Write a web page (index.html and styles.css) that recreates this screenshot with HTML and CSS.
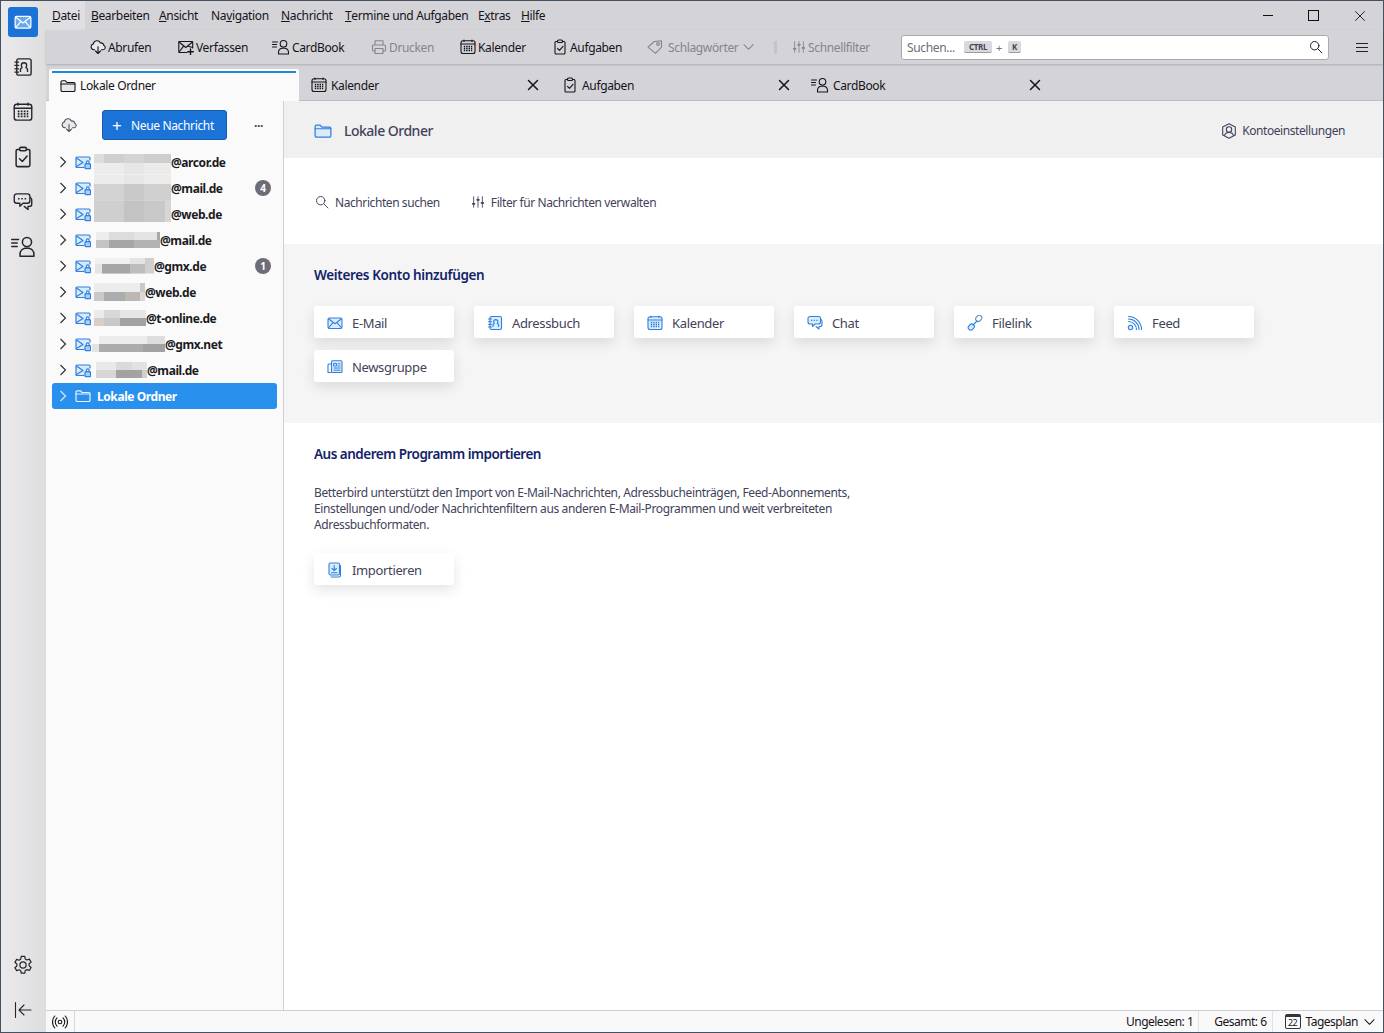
FILE: index.html
```html
<!DOCTYPE html>
<html lang="de">
<head>
    <meta charset="UTF-8">
    <title>Betterbird - Lokale Ordner</title>
    <link rel="stylesheet" href="styles.css">
</head>
<body>
    <!-- Icon-Sprite -->
    <svg class="sprite" xmlns="http://www.w3.org/2000/svg">
        <symbol id="i-mail" viewBox="0 0 16 16"><rect x="1" y="3" width="14" height="10.5" rx="1.5" fill="var(--fill, none)"/><path d="M1.5 3.800 8 8.800l6.500-5M1.500 13l4.700-5.600M14.500 13 9.800 7.400"/></symbol>
        <symbol id="i-mail-lock" viewBox="0 0 16 16"><path d="M9 13.500H2a1 1 0 0 1-1-1V4a1 1 0 0 1 1-1h12a1 1 0 0 1 1 1v3.500H10V13z" fill="#d8eafd" stroke="none"/><path d="M9 13.500H2a1 1 0 0 1-1-1V4a1 1 0 0 1 1-1h12a1 1 0 0 1 1 1v2" fill="none"/><path d="M1.500 4l6.500 4.500-6.500 4" fill="none"/><rect x="10" y="9.700" width="5.500" height="5" rx="1" fill="#a9d0f8"/><path d="M11.300 9.700V8.200a1.400 1.400 0 0 1 2.800 0v1.500" fill="none"/></symbol>
        <symbol id="i-cloud" viewBox="0 0 16 16"><path d="M4.500 10.800H3.800a3 3 0 0 1-.4-5.900 3.700 3.700 0 0 1 7-1 3 3 0 0 1 3.500 2.700 2.200 2.200 0 0 1-.8 4.200h-1.600" fill="#e9e9ec"/><path d="M8 7.500v7M5.500 12 8 14.500l2.500-2.500" fill="none"/></symbol>
        <symbol id="i-compose" viewBox="0 0 16 16"><path d="M9 13.500H1.500a.7.7 0 0 1-.7-.7V3.200a.7.7 0 0 1 .7-.7h12.500a.7.7 0 0 1 .7.7V9" fill="none"/><path d="M1 3l6.800 5.500L14.500 3M1.200 13l4.300-5.800M14.500 8.500 10.200 7.200" fill="none"/><path d="M12.500 10v5.500M9.800 12.800h5.500" stroke-width="1.400"/></symbol>
        <symbol id="i-cardbook" viewBox="0 0 18 16"><path d="M.5 3h5M.5 5.500h4M.5 8h4" stroke-width="1"/><circle cx="11.500" cy="4.800" r="3.300" fill="none"/><path d="M6.500 15v-1.500c0-2.500 2-4 3.500-4.300h3c1.500.3 3.500 1.800 3.500 4.300V15z" fill="none"/></symbol>
        <symbol id="i-print" viewBox="0 0 16 16"><path d="M4 6V1.800h8V6M4 12H2.500a1 1 0 0 1-1-1V7a1 1 0 0 1 1-1h11a1 1 0 0 1 1 1v4a1 1 0 0 1-1 1H12" fill="none"/><path d="M4 9.500h8v5H4z" fill="none"/></symbol>
        <symbol id="i-cal" viewBox="0 0 16 16"><rect x="1" y="1.800" width="14" height="12.700" rx="2" fill="var(--fill, none)"/><path d="M1 5h14M4 1v1.500M12 1v1.500"/><path d="M3.800 7.500h8.400M3.800 9.500h8.400M3.800 11.500h8.400" stroke-dasharray="1.400 1" stroke-width="1.300" stroke-linecap="butt"/></symbol>
        <symbol id="i-task" viewBox="0 0 16 16"><path d="M5.500 2.500H4a1 1 0 0 0-1 1v10.500a1 1 0 0 0 1 1h8a1 1 0 0 0 1-1V3.500a1 1 0 0 0-1-1h-1.500" fill="none"/><rect x="5.500" y="1" width="5" height="2.500" rx="1" fill="none"/><path d="m5.500 9.300 2 2 3.500-4" fill="none"/></symbol>
        <symbol id="i-tag" viewBox="0 0 16 16"><path d="M1 8.200 7.200 2.500l7.300-.8v6.500l-6 6.200z" fill="none"/><circle cx="11" cy="5" r="1.400" fill="none"/></symbol>
        <symbol id="i-filter" viewBox="0 0 16 16"><path d="M3 2v12M8 2v12M13 2v12" stroke-width="1"/><path d="M2 10h2M7 5.500h2M12 9h2" stroke-width="2"/></symbol>
        <symbol id="i-search" viewBox="0 0 16 16"><circle cx="6.500" cy="6.500" r="4.800" fill="none"/><path d="m10 10 4.800 4.800"/></symbol>
        <symbol id="i-folder" viewBox="0 0 16 16"><path d="M1 4a1.200 1.200 0 0 1 1.200-1.200h3.300L7 4.500h6.800A1.200 1.200 0 0 1 15 5.700v6.600a1.200 1.200 0 0 1-1.200 1.200H2.200A1.200 1.200 0 0 1 1 12.300z" fill="var(--fill, none)"/><path d="M1 6h14" fill="none"/></symbol>
        <symbol id="i-book" viewBox="0 0 16 16"><rect x="3" y="1.500" width="11.500" height="13" rx="1.500" fill="var(--fill, none)"/><path d="M1.500 4h3M1.500 6.700h3M1.500 9.400h3M1.500 12h3" stroke-width="1"/><path d="M6 11.500v-1.500c0-.8.800-1.300 1.300-1.500a2.600 2.600 0 0 1-.6-1.800 2.100 2.100 0 0 1 4.200 0c0 .7-.2 1.300-.6 1.800.5.200 1.300.7 1.300 1.500v1.500" fill="none"/></symbol>
        <symbol id="i-chat" viewBox="0 0 16 16"><path d="M3 1.500h8.500a2 2 0 0 1 2 2V7a2 2 0 0 1-2 2H8l-2.500 2.500V9H3a2 2 0 0 1-2-2V3.500a2 2 0 0 1 2-2z" fill="var(--fill, none)"/><path d="M14 4.500a2 2 0 0 1 1 1.700v3.300a2 2 0 0 1-2 2h-1V14l-3-2.500" fill="none"/><path d="M4 5.300h6.500" stroke-dasharray="1.200 1.450" stroke-width="1.200" stroke-linecap="butt"/></symbol>
        <symbol id="i-link" viewBox="0 0 16 16"><rect x="8.500" y="1" width="6.500" height="5" rx="2.500" transform="rotate(-45 11.700 3.500)" fill="none" stroke="#5d8fcf"/><rect x="1" y="9.500" width="6.500" height="5" rx="2.500" transform="rotate(-45 4.300 12)" fill="#d8eafd"/><path d="m6 10 4-4"/></symbol>
        <symbol id="i-feed" viewBox="0 0 16 16"><circle cx="3.500" cy="12.500" r="2.200" fill="var(--fill, none)"/><path d="M1.500 6.500a8 8 0 0 1 8 8M1.500 4a10.500 10.500 0 0 1 10.500 10.500M1.500 1.500a13 13 0 0 1 13 13" fill="none"/></symbol>
        <symbol id="i-news" viewBox="0 0 16 16"><path d="M5 5H2a1 1 0 0 0-1 1v7.500h3" fill="none"/><rect x="4.500" y="1.800" width="10.500" height="11.700" rx="1" fill="var(--fill, none)"/><path d="M7 4.500h2.500v2.500H7zM11 4.800h2M11 7h2M7 9h6M7 11.200h6" fill="none" stroke-width="1"/></symbol>
        <symbol id="i-import" viewBox="0 0 16 16"><rect x="2" y="1" width="10.500" height="12" rx="1.500" fill="var(--fill, none)"/><path d="M13.500 3.500v10a1.500 1.500 0 0 1-1.500 1.500H4" fill="none"/><path d="M7.200 3.500v5M5 6.500l2.200 2.200 2.200-2.200M4.500 10.800h5.500" fill="none"/></symbol>
        <symbol id="i-account" viewBox="0 0 16 16"><path d="M8 .8 14.300 4v8L8 15.200 1.700 12V4z" fill="none"/><circle cx="8" cy="6.500" r="2.700" fill="none"/><path d="M3.500 12.500c.5-2 2.200-3 4.500-3s4 1 4.500 3" fill="none"/></symbol>
        <symbol id="i-gear" viewBox="0 0 18 18"><path d="M7.400 1.300h3.200l.4 2.300 1.500.9 2.200-.8 1.600 2.700-1.800 1.500v1.800l1.800 1.500-1.600 2.700-2.200-.8-1.500.9-.4 2.300H7.400L7 14.200l-1.500-.9-2.200.8-1.600-2.700 1.800-1.500V8.100L1.700 6.600l1.600-2.700 2.200.8L7 3.600z" fill="none"/><circle cx="9" cy="9" r="2.800" fill="none"/></symbol>
        <symbol id="i-collapse" viewBox="0 0 18 18"><path d="M1.500 1.500v15M17 9H5M10 4 5 9l5 5" fill="none"/></symbol>
        <symbol id="i-radio" viewBox="0 0 16 16"><circle cx="8" cy="8" r="1.800" fill="none"/><path d="M5 3.800a6 6 0 0 0 0 8.400M11 3.800a6 6 0 0 1 0 8.400M2.800 2a9 9 0 0 0 0 12M13.200 2a9 9 0 0 1 0 12" fill="none"/></symbol>
        <symbol id="i-chevron" viewBox="0 0 8 12"><path d="m1.500 1 5 5-5 5" fill="none"/></symbol>
        <symbol id="i-down" viewBox="0 0 12 8"><path d="m1 1.500 5 5 5-5" fill="none"/></symbol>
        <symbol id="i-close" viewBox="0 0 12 12"><path d="m1.500 1.500 9 9M10.500 1.500l-9 9"/></symbol>
    </svg>

    <div class="window">
        <nav class="spaces">
            <div class="space-mail"><svg class="ico ico-18"><use href="#i-mail"/></svg></div>
            <div class="space-item"><svg class="ico ico-20"><use href="#i-book"/></svg></div>
            <div class="space-item"><svg class="ico ico-20"><use href="#i-cal"/></svg></div>
            <div class="space-item"><svg class="ico ico-task"><use href="#i-task"/></svg></div>
            <div class="space-item"><svg class="ico ico-20"><use href="#i-chat"/></svg></div>
            <div class="space-item"><svg class="ico ico-22"><use href="#i-cardbook"/></svg></div>
            <div class="space-item space-bottom"><svg class="ico ico-20"><use href="#i-gear"/></svg></div>
            <div class="space-item"><svg class="ico ico-18"><use href="#i-collapse"/></svg></div>
        </nav>

        <div class="content">
            <div class="menubar">
                <span class="menu-item menu-active"><u>D</u>atei</span>
                <span class="menu-item"><u>B</u>earbeiten</span>
                <span class="menu-item"><u>A</u>nsicht</span>
                <span class="menu-item">Na<u>v</u>igation</span>
                <span class="menu-item"><u>N</u>achricht</span>
                <span class="menu-item"><u>T</u>ermine und Aufgaben</span>
                <span class="menu-item">E<u>x</u>tras</span>
                <span class="menu-item"><u>H</u>ilfe</span>
                <div class="win-controls">
                    <span class="win-min"></span>
                    <span class="win-max"></span>
                    <svg class="ico win-close"><use href="#i-close"/></svg>
                </div>
            </div>

            <div class="toolbar">
                <span class="tool"><svg class="ico"><use href="#i-cloud"/></svg>Abrufen</span>
                <span class="tool"><svg class="ico"><use href="#i-compose"/></svg>Verfassen</span>
                <span class="tool"><svg class="ico ico-wide"><use href="#i-cardbook"/></svg>CardBook</span>
                <span class="tool tool-off"><svg class="ico"><use href="#i-print"/></svg>Drucken</span>
                <span class="tool"><svg class="ico"><use href="#i-cal"/></svg>Kalender</span>
                <span class="tool"><svg class="ico"><use href="#i-task"/></svg>Aufgaben</span>
                <span class="tool tool-off"><svg class="ico ico-wide tool-tag"><use href="#i-tag"/></svg>Schlagwörter<svg class="ico tool-arrow"><use href="#i-down"/></svg></span>
                <span class="tool-sep"></span>
                <span class="tool tool-off"><svg class="ico ico-14"><use href="#i-filter"/></svg>Schnellfilter</span>
                <div class="searchbox">
                    <span class="search-hint">Suchen...</span>
                    <kbd class="key key-ctrl">CTRL</kbd>
                    <span class="key-plus">+</span>
                    <kbd class="key">K</kbd>
                    <svg class="ico search-ico"><use href="#i-search"/></svg>
                </div>
                <span class="hamburger"></span>
            </div>

            <div class="tabbar">
                <div class="tab tab-active"><svg class="ico"><use href="#i-folder"/></svg>Lokale Ordner</div>
                <div class="tab"><svg class="ico"><use href="#i-cal"/></svg>Kalender<svg class="ico tab-close"><use href="#i-close"/></svg></div>
                <div class="tab"><svg class="ico"><use href="#i-task"/></svg>Aufgaben<svg class="ico tab-close"><use href="#i-close"/></svg></div>
                <div class="tab"><svg class="ico ico-wide tab-person"><use href="#i-cardbook"/></svg>CardBook<svg class="ico tab-close"><use href="#i-close"/></svg></div>
            </div>

            <div class="panes">
                <aside class="folder-pane">
                    <div class="folder-head">
                        <svg class="ico folder-cloud"><use href="#i-cloud"/></svg>
                        <button class="btn-new"><span class="btn-plus">+</span>Neue Nachricht</button>
                        <span class="more">···</span>
                    </div>
                    <ul class="tree">
                        <li class="row"><svg class="chev"><use href="#i-chevron"/></svg><svg class="ico acc"><use href="#i-mail-lock"/></svg><span class="blur b1"></span>@arcor.de</li>
                        <li class="row"><svg class="chev"><use href="#i-chevron"/></svg><svg class="ico acc"><use href="#i-mail-lock"/></svg><span class="blur b2"></span>@mail.de<span class="badge">4</span></li>
                        <li class="row"><svg class="chev"><use href="#i-chevron"/></svg><svg class="ico acc"><use href="#i-mail-lock"/></svg><span class="blur b3"></span>@web.de</li>
                        <li class="row"><svg class="chev"><use href="#i-chevron"/></svg><svg class="ico acc"><use href="#i-mail-lock"/></svg><span class="blur b4"></span>@mail.de</li>
                        <li class="row"><svg class="chev"><use href="#i-chevron"/></svg><svg class="ico acc"><use href="#i-mail-lock"/></svg><span class="blur b5"></span>@gmx.de<span class="badge">1</span></li>
                        <li class="row"><svg class="chev"><use href="#i-chevron"/></svg><svg class="ico acc"><use href="#i-mail-lock"/></svg><span class="blur b6"></span>@web.de</li>
                        <li class="row"><svg class="chev"><use href="#i-chevron"/></svg><svg class="ico acc"><use href="#i-mail-lock"/></svg><span class="blur b7"></span>@t-online.de</li>
                        <li class="row"><svg class="chev"><use href="#i-chevron"/></svg><svg class="ico acc"><use href="#i-mail-lock"/></svg><span class="blur b8"></span>@gmx.net</li>
                        <li class="row"><svg class="chev"><use href="#i-chevron"/></svg><svg class="ico acc"><use href="#i-mail-lock"/></svg><span class="blur b9"></span>@mail.de</li>
                        <li class="row row-selected"><svg class="chev"><use href="#i-chevron"/></svg><svg class="ico acc"><use href="#i-folder"/></svg><span class="row-label">Lokale Ordner</span></li>
                    </ul>
                </aside>

                <main class="account">
                    <header class="account-head">
                        <svg class="ico ico-18 blue"><use href="#i-folder"/></svg>
                        <span class="account-name">Lokale Ordner</span>
                        <span class="account-settings"><svg class="ico"><use href="#i-account"/></svg>Kontoeinstellungen</span>
                    </header>

                    <section class="account-actions">
                        <span class="action"><svg class="ico ico-14"><use href="#i-search"/></svg>Nachrichten suchen</span>
                        <span class="action"><svg class="ico ico-14"><use href="#i-filter"/></svg>Filter für Nachrichten verwalten</span>
                    </section>

                    <section class="add-account">
                        <h2>Weiteres Konto hinzufügen</h2>
                        <div class="cards">
                            <span class="card"><svg class="ico blue"><use href="#i-mail"/></svg>E-Mail</span>
                            <span class="card"><svg class="ico blue"><use href="#i-book"/></svg>Adressbuch</span>
                            <span class="card"><svg class="ico blue"><use href="#i-cal"/></svg>Kalender</span>
                            <span class="card"><svg class="ico blue"><use href="#i-chat"/></svg>Chat</span>
                            <span class="card"><svg class="ico blue"><use href="#i-link"/></svg>Filelink</span>
                            <span class="card"><svg class="ico blue"><use href="#i-feed"/></svg>Feed</span>
                            <span class="card"><svg class="ico blue"><use href="#i-news"/></svg>Newsgruppe</span>
                        </div>
                    </section>

                    <section class="import">
                        <h2>Aus anderem Programm importieren</h2>
                        <p>Betterbird unterstützt den Import von E-Mail-Nachrichten, Adressbucheinträgen, Feed-Abonnements, Einstellungen und/oder Nachrichtenfiltern aus anderen E-Mail-Programmen und weit verbreiteten Adressbuchformaten.</p>
                        <span class="card"><svg class="ico blue"><use href="#i-import"/></svg>Importieren</span>
                    </section>
                </main>
            </div>

            <footer class="statusbar">
                <span class="status-radio"><svg class="ico"><use href="#i-radio"/></svg></span>
                <span class="status-cell status-unread">Ungelesen: 1</span>
                <span class="status-cell">Gesamt: 6</span>
                <span class="status-day"><span class="day-ico">22</span>Tagesplan<svg class="ico day-arrow"><use href="#i-down"/></svg></span>
            </footer>
        </div>
    </div>
</body>
</html>
```
FILE: styles.css
```css
* {
    box-sizing: border-box;
}

body {
    margin: 0;
    height: 1033px;
    overflow: hidden;
    font-family: "Noto Sans", "Open Sans", sans-serif;
    font-size: 12px;
    letter-spacing: -0.35px;
    color: #15141a;
}

.sprite {
    display: none;
}

.window {
    display: flex;
    height: 1033px;
    border: 1px solid #46515f;
    background: #fafafb;
}

/* Iconos */
.ico {
    width: 16px;
    height: 16px;
    flex: none;
    fill: none;
    stroke: currentColor;
    stroke-width: 1.1;
    stroke-linejoin: round;
    stroke-linecap: round;
}

.ico-14 {
    width: 14px;
    height: 14px;
}

.ico-18 {
    width: 18px;
    height: 18px;
}

.ico-20 {
    width: 20px;
    height: 20px;
}

.ico-22 {
    width: 25px;
    height: 23px;
}

.ico-task {
    width: 22px;
    height: 22px;
}

.ico-wide {
    width: 18px;
}

.blue {
    color: #2f80dc;
    --fill: #dcebfc;
}

/* Barra de espacios */
.spaces {
    width: 45px;
    flex: none;
    display: flex;
    flex-direction: column;
    align-items: center;
    padding: 6px 1px 0 0;
    background: linear-gradient(90deg, #eaeaec, #dededf);
    color: #26262c;
}

.space-mail {
    width: 30px;
    height: 30px;
    margin-bottom: 7px;
    display: flex;
    align-items: center;
    justify-content: center;
    border-radius: 3px;
    background: #1b73d8;
    color: #fff;
    --fill: #6aa8ec;
}

.space-item {
    width: 100%;
    height: 45px;
    flex: none;
    display: flex;
    align-items: center;
    justify-content: center;
}

.space-bottom {
    margin-top: auto;
}

/* Zona derecha */
.content {
    flex: 1;
    min-width: 0;
    display: flex;
    flex-direction: column;
}

.menubar {
    height: 29px;
    display: grid;
    grid-template-columns: 39px 68px 52px 70px 64px 133px 43px 40px 1fr;
    align-items: center;
    background: #d3d3d8;
}

.menu-item {
    height: 29px;
    padding: 0 6px;
    display: flex;
    align-items: center;
    white-space: pre;
}

.menu-active {
    background: #dfdfe3;
}

.win-controls {
    justify-self: end;
    width: 120px;
    display: flex;
    align-items: center;
    justify-content: space-between;
    padding-right: 17px;
}

.win-min {
    width: 10px;
    height: 1px;
    background: #111;
}

.win-max {
    width: 11px;
    height: 11px;
    border: 1px solid #111;
}

.win-close {
    width: 12px;
    height: 12px;
    stroke-width: 0.9;
}

.toolbar {
    height: 34px;
    display: grid;
    grid-template-columns: 88px 94px 99px 89px 92px 94px 129px 17px 109px 428px 1fr;
    align-items: center;
    padding-left: 44px;
    background: #d3d3d8;
    box-shadow: 0 1px 2px rgba(0, 0, 0, 0.18);
    position: relative;
}

.tool {
    display: flex;
    align-items: center;
    gap: 2px;
    white-space: nowrap;
}

.tool-off {
    color: #85858c;
}

.tool-tag {
    margin-right: 2px;
}

.tool-arrow {
    width: 11px;
    height: 8px;
    margin-left: 3px;
}

.tool-sep {
    width: 3px;
    height: 13px;
    background: #c3c3c8;
    margin-left: -1px;
}

.searchbox {
    height: 25px;
    display: flex;
    align-items: center;
    padding: 0 5px;
    background: #fff;
    border: 1px solid #a9a9b0;
    border-radius: 3px;
}

.search-hint {
    width: 57px;
    color: #6d6d75;
}

.key {
    height: 12px;
    padding: 0 4px;
    display: flex;
    align-items: center;
    background: #dadade;
    border-bottom: 1px solid #9b9ba3;
    border-radius: 2px;
    font-family: "Noto Sans", sans-serif;
    font-size: 8px;
    font-weight: 700;
    color: #44444c;
}

.key-ctrl {
    width: 28px;
    justify-content: center;
}

.key-plus {
    margin: 0 6px 0 4px;
    color: #77777f;
    font-size: 11px;
}

.search-ico {
    margin-left: auto;
    width: 14px;
    height: 14px;
}

.hamburger {
    width: 12px;
    height: 9px;
    margin-left: 27px;
    border-top: 1px solid #222;
    border-bottom: 1px solid #222;
    position: relative;
}

.hamburger::after {
    content: "";
    position: absolute;
    left: 0;
    right: 0;
    top: 3px;
    height: 1px;
    background: #222;
}

.tabbar {
    height: 37px;
    display: flex;
    align-items: flex-end;
    padding-left: 3px;
    background: #d3d3d8;
    border-bottom: 1px solid #bdbdc3;
}

.tab {
    width: 251px;
    height: 31px;
    flex: none;
    display: flex;
    align-items: center;
    gap: 4px;
    padding: 1px 8px 0 12px;
    white-space: nowrap;
}

.tab-active {
    width: 250px;
    height: 32px;
    margin-bottom: -1px;
    padding: 0 8px 2px 11px;
    border-top: 3px solid #fff;
    background: #fafafb;
    position: relative;
    border-radius: 3px 3px 0 0;
    --fill: #e8e8ea;
}

.tab-active::before {
    content: "";
    position: absolute;
    left: 3px;
    right: 3px;
    top: -1px;
    height: 2px;
    background: #1e88d8;
}

.tab-person {
    margin-left: -2px;
}

.tab-close {
    margin-left: auto;
    width: 12px;
    height: 12px;
    margin-right: 3px;
    stroke-width: 1.5;
}

.panes {
    flex: 1;
    min-height: 0;
    display: flex;
}

/* Panel de carpetas */
.folder-pane {
    width: 238px;
    flex: none;
    background: #fafafb;
    border-right: 1px solid #d0d0d4;
}

.folder-head {
    height: 48px;
    display: flex;
    align-items: center;
    padding-left: 15px;
}

.folder-cloud {
    color: #52525e;
}

.btn-new {
    width: 125px;
    height: 30px;
    margin-left: 25px;
    display: flex;
    align-items: center;
    padding: 0 0 0 9px;
    background: #1b73d8;
    border: 1px solid #155ba8;
    border-radius: 3px;
    color: #fff;
    font: inherit;
    letter-spacing: inherit;
}

.btn-plus {
    width: 19px;
    font-size: 17px;
    line-height: 1;
    text-align: left;
}

.more {
    margin-left: 27px;
    font-weight: 700;
    color: #44444c;
}

.tree {
    list-style: none;
    margin: 0;
    padding: 0 6px;
}

.row {
    height: 26px;
    display: flex;
    align-items: center;
    padding-left: 7px;
    font-weight: 700;
    letter-spacing: -0.42px;
    color: #1b1b22;
    white-space: nowrap;
}

.chev {
    width: 8px;
    height: 12px;
    flex: none;
    fill: none;
    stroke: #33333b;
    stroke-width: 1.2;
}

.acc {
    margin-left: 8px;
    color: #2f80dc;
    stroke-width: 1.2;
    --fill: #d8eafd;
}

.blur {
    width: 50px;
    height: 16px;
    flex: none;
    margin-left: 3px;
}

.b1 {
    width: 77px;
    height: 21px;
    align-self: flex-end;
    background:
        linear-gradient(90deg, #dcdcdc 0 13%, #cfcfcf 13% 39%, #d4d4d4 39% 65%, #cdcdcd 65%) top / 100% 45% no-repeat,
        linear-gradient(90deg, #ececec 0 39%, #e6e6e6 39% 65%, #ebebeb 65%) bottom / 100% 55% no-repeat;
}

.b2 {
    width: 77px;
    height: 26px;
    background:
        linear-gradient(90deg, #ececec 0 39%, #e6e6e6 39% 65%, #ebebeb 65%) top / 100% 35% no-repeat,
        linear-gradient(90deg, #d2d2d2 0 39%, #c8c8c8 39% 65%, #d0d0d0 65%) bottom / 100% 65% no-repeat;
}

.b3 {
    width: 77px;
    height: 21px;
    align-self: flex-start;
    background: linear-gradient(90deg, #cfcfcf 0 39%, #c3c3c3 39% 65%, #c8c8c8 65% 92%, #d6d6d6 92%);
}

.b4 {
    width: 64px;
    margin-left: 5px;
    background:
        linear-gradient(90deg, #ededed 0 20%, #dcdcdc 20% 60%, #e4e4e4 60% 95%, #a8a8a8 95%) top / 100% 50% no-repeat,
        linear-gradient(90deg, #c4c4c4 0 20%, #a6a6a6 20% 60%, #b3b3b3 60%) bottom / 100% 50% no-repeat;
}

.b5 {
    width: 59px;
    margin-left: 4px;
    background:
        linear-gradient(90deg, #f0f0f0 0 60%, #e4e4e4 60% 85%, #cfcfcf 85%) top / 100% 40% no-repeat,
        linear-gradient(90deg, #e4e4e4 0 12%, #a6a6a6 12% 60%, #bdbdbd 60% 85%, #d0d0d0 85%) bottom / 100% 60% no-repeat;
}

.b6 {
    width: 51px;
    height: 18px;
    background:
        linear-gradient(90deg, #ececec 0 90%, #c9c9c9 90%) top / 100% 50% no-repeat,
        linear-gradient(90deg, #c9c9c9 0 20%, #a9adaf 20% 60%, #bcb7b2 60% 90%, #d8d8d8 90%) bottom / 100% 50% no-repeat;
}

.b7 {
    width: 52px;
    background:
        linear-gradient(90deg, #ebebeb 0 20%, #d7d7d7 20% 50%, #e6e6e6 50%) top / 100% 50% no-repeat,
        linear-gradient(90deg, #d8cfc9 0 20%, #c8c8c8 20% 50%, #a2a2a2 50%) bottom / 100% 50% no-repeat;
}

.b8 {
    width: 73px;
    margin-left: 1px;
    background:
        linear-gradient(90deg, #fafafb 0 10%, #ececec 10% 75%, #dedede 75%) top / 100% 50% no-repeat,
        linear-gradient(90deg, #e4e4e4 0 10%, #ababab 10% 70%, #a2a2a2 70%) bottom / 100% 50% no-repeat;
}

.b9 {
    width: 51px;
    margin-left: 5px;
    background:
        linear-gradient(90deg, #e9e9e9 0 40%, #dadada 40% 70%, #e2e2e2 70%) top / 100% 50% no-repeat,
        linear-gradient(90deg, #d6d6d6 0 40%, #a2a2a2 40% 90%, #cfcfcf 90%) bottom / 100% 50% no-repeat;
}

.row-selected {
    background: #2a90ee;
    border-radius: 3px;
    color: #fff;
}

.row-selected .chev {
    stroke: #d5e9fb;
}

.row-selected .acc {
    color: #e6f2fd;
    --fill: none;
}

.row-label {
    margin-left: 6px;
}

.badge {
    width: 16px;
    height: 16px;
    margin-left: auto;
    margin-right: 6px;
    border-radius: 50%;
    background: #6d6d78;
    color: #fff;
    font-size: 10px;
    line-height: 16px;
    letter-spacing: 0;
    text-align: center;
}

/* Panel principal */
.account {
    flex: 1;
    min-width: 0;
    background: #fff;
    color: #42425a;
}

.account-head {
    height: 57px;
    display: flex;
    align-items: center;
    padding: 2px 38px 0 30px;
    background: #f0f0f1;
}

.account-name {
    margin-left: 12px;
    font-size: 14px;
    font-weight: 500;
    letter-spacing: -0.5px;
}

.account-settings {
    margin-left: auto;
    display: flex;
    align-items: center;
    gap: 5px;
    letter-spacing: -0.42px;
}

.account-actions {
    height: 86px;
    display: flex;
    align-items: center;
    gap: 31px;
    padding: 2px 0 0 31px;
    letter-spacing: -0.42px;
}

.action {
    display: flex;
    align-items: center;
    gap: 6px;
}

.add-account {
    height: 179px;
    padding: 22px 30px 0;
    background: #f5f5f5;
}

h2 {
    margin: 0;
    font-size: 13.5px;
    line-height: 18px;
    font-weight: 600;
    letter-spacing: -0.35px;
    color: #122368;
}

.import h2 {
    letter-spacing: -0.5px;
}

.cards {
    display: flex;
    flex-wrap: wrap;
    gap: 12px 20px;
    margin-top: 22px;
}

.card {
    width: 140px;
    height: 32px;
    display: flex;
    align-items: center;
    gap: 9px;
    padding: 1px 0 0 13px;
    background: #fff;
    border-radius: 3px;
    box-shadow: 0 5px 14px rgba(0, 0, 0, 0.11);
    font-size: 13px;
}

.import {
    padding: 22px 30px 0;
}

.import p {
    width: 545px;
    margin: 22px 0 20px;
    line-height: 16px;
    letter-spacing: -0.37px;
}

.statusbar {
    height: 22px;
    flex: none;
    display: flex;
    align-items: center;
    background: #f9f9fa;
    border-top: 1px solid #cfcfd3;
    letter-spacing: -0.5px;
}

.status-radio {
    width: 29px;
    height: 100%;
    display: flex;
    align-items: center;
    padding-left: 6px;
    border-right: 1px solid #d8d8dc;
}

.status-cell {
    height: 100%;
    display: flex;
    align-items: center;
    padding: 0 5px 0 15px;
    border-right: 1px solid #e2e2e5;
}

.status-unread {
    margin-left: auto;
}

.status-day {
    display: flex;
    align-items: center;
    padding: 0 8px 0 12px;
}

.day-ico {
    width: 16px;
    height: 15px;
    margin-right: 5px;
    border: 1px solid #33333b;
    border-top-width: 3px;
    border-radius: 2px;
    font-size: 9px;
    line-height: 11px;
    text-align: center;
}

.day-arrow {
    width: 11px;
    height: 8px;
    margin-left: 6px;
}
```
